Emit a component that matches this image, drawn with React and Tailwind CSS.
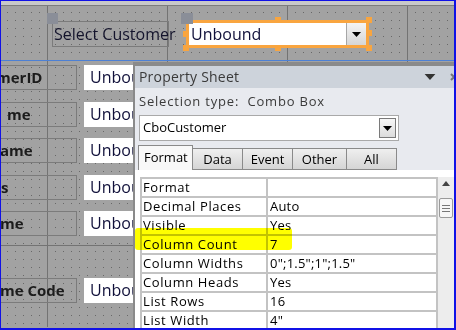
import React from "react";

const dots =
  "bg-[image:linear-gradient(90deg,#737373_1px,transparent_1px),conic-gradient(at_1px_1px,transparent_75%,#686868_0)] bg-[length:120px_100%,8px_8px] bg-[position:46px_0,6px_6px]";

const Caret = ({ className = "" }) => (
  <svg width="9" height="5" viewBox="0 0 9 5" className={className}>
    <path d="M0 0h9L4.5 5z" fill="currentColor" />
  </svg>
);

const Handle = ({ className }) => (
  <span className={`absolute w-[6px] h-[6px] bg-[#f9a53f] ${className}`} />
);

const fields = [
  { label: "merID", shift: "-ml-[5px]", mt: "mt-[4px]" },
  { label: "me", shift: "ml-[6px]", mt: "mt-[12px]" },
  { label: "ame", shift: "-ml-[1px]", mt: "mt-[11px]" },
  { label: "s", shift: "ml-0", mt: "mt-[12px]" },
  { label: "me", shift: "-ml-[1px]", mt: "mt-[11px]" },
  { label: "me Code", shift: "-ml-[1px]", mt: "mt-[42px]" },
];

const props = [
  ["Format", ""],
  ["Decimal Places", "Auto"],
  ["Visible", "Yes"],
  ["Column Count", "7"],
  ["Column Widths", '0";1.5";1";1.5"'],
  ["Column Heads", "Yes"],
  ["List Rows", "16"],
  ["List Width", '4"'],
];

const tabs = [
  { name: "Data", w: "w-[50px]" },
  { name: "Event", w: "w-[50px]" },
  { name: "Other", w: "w-[54px]" },
  { name: "All", w: "w-[50px]" },
];

export default function App() {
  return (
    <div className="relative w-[456px] h-[330px] overflow-hidden border-l border-t border-r-2 border-b-2 border-[#1111e6] bg-[#a2a2a2] font-['Open_Sans',sans-serif]">
      {/* form header section */}
      <div className="h-[5px] bg-[#c9c9c9] border-b border-[#7d7d7d]" />
      <div className={`h-[54px] ${dots} flex items-start pl-[51px] pt-[15px]`}>
        <div className="relative w-[117px] h-[26px] border border-[#7b7b7b] pl-[1px] text-[16px] leading-[24px] text-[#14142c] whitespace-nowrap">
          <span className="absolute -left-[6px] -top-[9px] w-[11px] h-[11px] bg-[#8a8e98]" />
          Select Customer
        </div>

        <div className="relative ml-[17px] -mt-[1px] w-[183px] h-[28px] border-[3px] border-[#f9a53f] flex">
          <span className="absolute -left-[8px] -top-[10px] w-[12px] h-[11px] bg-[#8a8e98]" />
          <Handle className="left-[86px] -top-[6px]" />
          <Handle className="left-[177px] -top-[6px]" />
          <Handle className="left-[177px] top-[7px]" />
          <Handle className="left-[177px] top-[22px]" />
          <Handle className="left-[86px] top-[22px]" />
          <Handle className="-left-[6px] top-[8px]" />
          <Handle className="-left-[6px] top-[22px]" />
          <div className="flex-1 bg-white text-[16px] leading-[22px] pl-[2px] text-[#10103a]">
            Unbound
          </div>
          <div className="w-[20px] border-l border-[#a6a6a6] bg-gradient-to-b from-[#f4f4f4] to-[#d6d6d6] flex items-center justify-center text-black">
            <Caret />
          </div>
        </div>
      </div>
      <div className="h-px bg-[#4d80d4]" />

      {/* detail section */}
      <div className={`relative h-[266px] ${dots} flex flex-col`}>
        {fields.map((f, i) => (
          <div key={i} className={`flex h-[25px] ${f.mt}`}>
            <div className="w-[76px] h-full border-y border-r border-[#7b7b7b] overflow-hidden">
              <div className={`${f.shift} text-[15px] font-bold leading-[23px] text-[#1c1c1c] whitespace-nowrap`}>
                {f.label}
              </div>
            </div>
            <div className="ml-[7px] w-[49px] h-full bg-white overflow-hidden text-[16px] leading-[25px] pl-[6px] text-[#10103a] whitespace-nowrap">
              Unbou
            </div>
          </div>
        ))}
        <div className="absolute left-0 right-0 top-[184px] h-px bg-[#737373]" />
      </div>

      {/* property sheet */}
      <div className="absolute left-[132px] top-[61px] right-0 bottom-0 border-l-2 border-t-4 border-[#8a8a8a] flex flex-col bg-[#e8eaef] text-[#3a3a3a]">
        <div className="h-[22px] shrink-0 bg-[#cdd3db] flex items-center pl-[4px]">
          <span className="text-[14px] tracking-[0.2px] leading-none">Property Sheet</span>
          <Caret className="ml-auto w-[12px] h-[6px] text-[#333]" />
          <svg width="8" height="8" viewBox="0 0 8 8" className="ml-[14px] mr-[-4px] shrink-0 text-[#777]">
            <path d="M1 1l6 6M7 1L1 7" stroke="currentColor" strokeWidth="2" />
          </svg>
        </div>

        <div className="h-[27px] shrink-0 flex items-center pl-[4px] text-[13px] tracking-[0.8px] whitespace-pre">
          Selection type:  Combo Box
        </div>

        <div className="ml-[4px] w-[260px] h-[26px] shrink-0 border border-[#a9a9a9] bg-white flex items-center pl-[3px] pr-[2px] text-[13px] text-black">
          CboCustomer
          <div className="ml-auto w-[17px] h-[20px] border border-[#7a7a7a] bg-gradient-to-b from-[#f7f7f7] to-[#dcdcdc] flex items-center justify-center">
            <Caret />
          </div>
        </div>

        <div className="mt-[4px] h-[25px] shrink-0 flex items-end pl-[3px] text-[13px] text-black">
          <div className="w-[55px] h-[25px] border border-b-0 border-[#8a8a8a] bg-[#f8f8f8] pl-[5px] leading-[22px]">
            Format
          </div>
          {tabs.map((t) => (
            <div
              key={t.name}
              className={`${t.w} h-[22px] border border-l-0 border-[#8a8a8a] bg-gradient-to-b from-[#efefef] to-[#d5d5d5] text-center leading-[21px]`}
            >
              {t.name}
            </div>
          ))}
        </div>

        <div className="flex-1 bg-white flex pl-[5px] pt-[7px]">
          <div className="relative self-start grid grid-cols-[124px_168px] gap-[2px] p-[2px] bg-[#c3c3c3]">
            {props.map(([k, v]) => (
              <React.Fragment key={k}>
                <div className="h-[17px] bg-white pl-[1px] text-[13px] tracking-[0.6px] leading-[17px] text-black whitespace-nowrap overflow-hidden">
                  {k}
                </div>
                <div className="h-[17px] bg-white pl-[2px] text-[13px] tracking-[0.2px] leading-[17px] text-black whitespace-nowrap overflow-hidden">
                  {v}
                </div>
              </React.Fragment>
            ))}
            <div className="absolute -left-[5px] top-[51px] w-[157px] h-[22px] bg-[#ffff00] mix-blend-multiply rounded-[3px]" />
          </div>
          <div className="ml-auto w-[16px] self-stretch bg-[#ededed] flex flex-col items-center">
            <svg width="8" height="5" viewBox="0 0 8 5" className="mt-[4px] text-[#444]">
              <path d="M0 5h8L4 0z" fill="currentColor" />
            </svg>
            <div className="mt-[12px] w-[14px] h-[20px] border border-[#9a9a9a] rounded-[2px] bg-[#f6f6f6] flex flex-col items-center justify-center gap-[2px]">
              <span className="w-[8px] h-px bg-[#777]" />
              <span className="w-[8px] h-px bg-[#777]" />
              <span className="w-[8px] h-px bg-[#777]" />
            </div>
          </div>
        </div>
      </div>
    </div>
  );
}
